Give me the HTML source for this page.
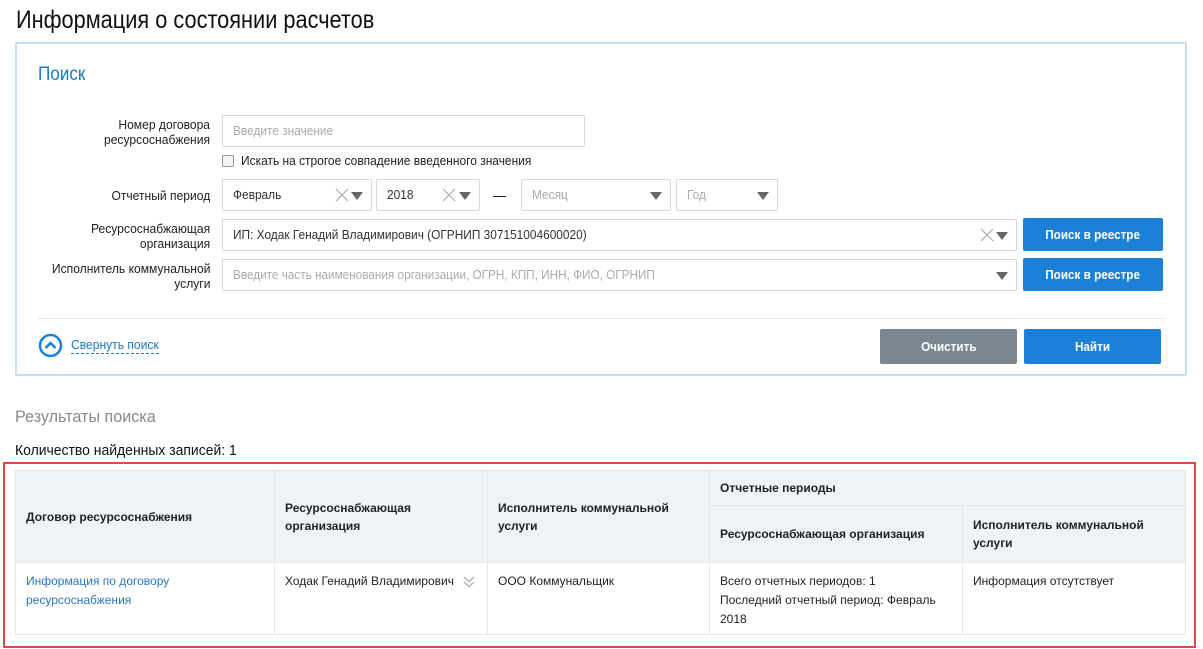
<!DOCTYPE html>
<html><head><meta charset="utf-8"><style>
*{box-sizing:border-box;margin:0;padding:0}
body{width:1203px;height:649px;background:#fff;position:relative;overflow:hidden;font-family:"Liberation Sans",sans-serif;color:#222}
.a{position:absolute}
.lbl{position:absolute;right:993px;text-align:right;font-size:13px;line-height:15px;color:#222;transform:scaleX(.93);transform-origin:right top}
.inp{position:absolute;height:32px;border:1px solid #d9d9d9;border-radius:2px;background:#fff;font-size:12.5px;line-height:30px;padding-left:10px;color:#333}
.t{display:inline-block;transform:scaleX(.95);transform-origin:left center;white-space:nowrap}
.ph{color:#aaa}
.tri{position:absolute;top:12px;width:0;height:0;border-left:6px solid transparent;border-right:6px solid transparent;border-top:8px solid #666}
.x{position:absolute;top:8px;width:14px;height:14px}
.btn{position:absolute;border-radius:2px;color:#fff;font-size:13px;font-weight:bold;text-align:center;background:#1a80d8}
.btn span{display:inline-block;transform:scaleX(.9)}
table{position:absolute;left:15px;top:470px;width:1171px;border-collapse:collapse;font-family:"Liberation Sans",sans-serif;font-size:12px}
td,th{border:1px solid #e3e7ea;vertical-align:top;text-align:left;padding:0 10px}
th{background:#eff3f6;font-weight:bold;color:#222;vertical-align:middle;line-height:18px}
td{line-height:19px;color:#222;padding-top:9px}
</style></head><body>
<div class="a" style="left:16px;top:4px;font-size:25px;line-height:32px;color:#111;transform:scaleX(.87);transform-origin:left top;white-space:nowrap">Информация о состоянии расчетов</div>
<div class="a" style="left:15px;top:42px;width:1172px;height:334px;border:2px solid #c6e0f3;border-radius:2px"></div>
<div class="a" style="left:38px;top:63px;font-size:19px;color:#1a78c2;line-height:24px;transform:scaleX(.9);transform-origin:left top">Поиск</div>

<div class="lbl" style="top:117px">Номер договора<br>ресурсоснабжения</div>
<div class="inp ph" style="left:222px;top:115px;width:363px"><span class="t">Введите значение</span></div>
<div class="a" style="left:222px;top:155px;width:12px;height:12px;border:1px solid #999;border-radius:2px;background:#f4f4f4"></div>
<div class="a" style="left:241px;top:153px;font-size:13px;line-height:16px;transform:scaleX(.92);transform-origin:left top;white-space:nowrap">Искать на строгое совпадение введенного значения</div>

<div class="lbl" style="top:188px">Отчетный период</div>
<div class="inp" style="left:222px;top:179px;width:150px"><span class="t">Февраль</span><svg class="x" style="left:112px" viewBox="0 0 14 14"><path d="M1 1L13 13M13 1L1 13" stroke="#aaa" stroke-width="1.2"/></svg><div class="tri" style="left:128px"></div></div>
<div class="inp" style="left:376px;top:179px;width:104px"><span class="t">2018</span><svg class="x" style="left:65px" viewBox="0 0 14 14"><path d="M1 1L13 13M13 1L1 13" stroke="#aaa" stroke-width="1.2"/></svg><div class="tri" style="left:82px"></div></div>
<div class="a" style="left:493px;top:196px;width:13px;height:1px;background:#222"></div>
<div class="inp ph" style="left:521px;top:179px;width:150px"><span class="t">Месяц</span><div class="tri" style="left:128px"></div></div>
<div class="inp ph" style="left:676px;top:179px;width:102px"><span class="t">Год</span><div class="tri" style="left:80px"></div></div>

<div class="lbl" style="top:221px">Ресурсоснабжающая<br>организация</div>
<div class="inp" style="left:222px;top:219px;width:795px"><span class="t">ИП: Ходак Генадий Владимирович (ОГРНИП 307151004600020)</span><svg class="x" style="left:757px" viewBox="0 0 14 14"><path d="M1 1L13 13M13 1L1 13" stroke="#aaa" stroke-width="1.2"/></svg><div class="tri" style="left:773px"></div></div>
<div class="btn" style="left:1023px;top:218px;width:140px;height:33px;line-height:33px"><span>Поиск в реестре</span></div>

<div class="lbl" style="top:261px">Исполнитель коммунальной<br>услуги</div>
<div class="inp ph" style="left:222px;top:259px;width:795px"><span class="t" style="transform:scaleX(.94)">Введите часть наименования организации, ОГРН, КПП, ИНН, ФИО, ОГРНИП</span><div class="tri" style="left:773px"></div></div>
<div class="btn" style="left:1023px;top:258px;width:140px;height:33px;line-height:33px"><span>Поиск в реестре</span></div>

<div class="a" style="left:38px;top:318px;width:1125px;height:1px;background:#e2e2e2"></div>
<svg class="a" style="left:38px;top:333px" width="25" height="25" viewBox="0 0 25 25"><circle cx="12.5" cy="12.5" r="10.5" fill="none" stroke="#1a80d8" stroke-width="2.5"/><path d="M7.5 15L12.5 10L17.5 15" fill="none" stroke="#1a80d8" stroke-width="2.5"/></svg>
<div class="a" style="left:71px;top:337px;font-size:13px;line-height:16px;color:#1a78c2;border-bottom:1px dashed #1a80d8;width:88px;white-space:nowrap"><span class="t" style="transform:scaleX(.93)">Свернуть поиск</span></div>
<div class="btn" style="left:880px;top:329px;width:137px;height:35px;line-height:35px;background:#7a8791"><span>Очистить</span></div>
<div class="btn" style="left:1024px;top:329px;width:137px;height:35px;line-height:35px"><span>Найти</span></div>

<div class="a" style="left:15px;top:406px;font-size:17px;color:#8a8a8a;line-height:22px;transform:scaleX(.95);transform-origin:left top;white-space:nowrap">Результаты поиска</div>
<div class="a" style="left:15px;top:441px;font-size:15px;color:#111;line-height:20px;transform:scaleX(.93);transform-origin:left top;white-space:nowrap">Количество найденных записей: 1</div>
<div class="a" style="left:3px;top:462px;width:1193px;height:186px;border:2px solid #e04848"></div>

<table>
<tr style="height:35px"><th rowspan="2" style="width:259px">Договор ресурсоснабжения</th><th rowspan="2" style="width:213px">Ресурсоснабжающая<br>организация</th><th rowspan="2" style="width:222px">Исполнитель коммунальной<br>услуги</th><th colspan="2">Отчетные периоды</th></tr>
<tr style="height:57px"><th style="width:253px">Ресурсоснабжающая организация</th><th>Исполнитель коммунальной<br>услуги</th></tr>
<tr style="height:72px"><td style="color:#2a78c0">Информация по договору<br>ресурсоснабжения</td><td style="position:relative">Ходак Генадий Владимирович <svg style="position:absolute;left:188px;top:13px" width="12" height="12" viewBox="0 0 12 12"><path d="M1 1L6 5.5L11 1M1 6L6 10.5L11 6" fill="none" stroke="#bbb" stroke-width="1.6"/></svg></td><td>ООО Коммунальщик</td><td>Всего отчетных периодов: 1<br>Последний отчетный период: Февраль<br>2018</td><td>Информация отсутствует</td></tr>
</table>
</body></html>
